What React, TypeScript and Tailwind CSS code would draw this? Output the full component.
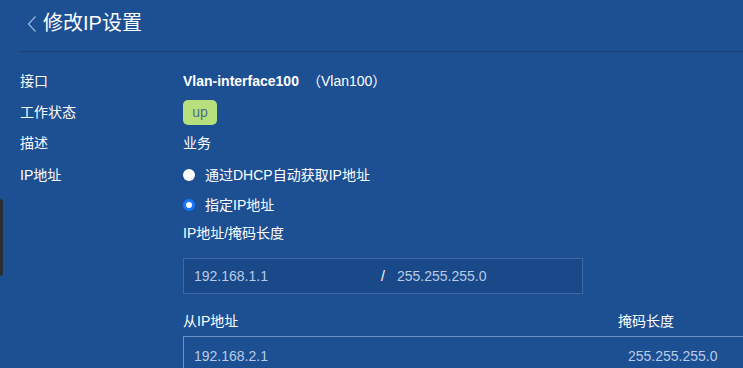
import React from 'react';

const font = { fontFamily: '"Liberation Sans", "Noto Sans CJK SC", sans-serif' };

const Row: React.FC<{ label: string; children?: React.ReactNode; className?: string }> = ({ label, children, className = '' }) => (
  <div className={`flex items-center ${className}`}>
    <div className="w-[163px] shrink-0">{label}</div>
    <div className="flex-1">{children}</div>
  </div>
);

const Radio: React.FC<{ checked?: boolean; label: string }> = ({ checked, label }) => (
  <label className="flex items-center gap-[10px] h-[20px]">
    {checked ? (
      <span className="w-[12px] h-[12px] rounded-full bg-white border-[3px] border-[#1677ff]" />
    ) : (
      <span className="w-[12px] h-[12px] rounded-full bg-white" />
    )}
    <span>{label}</span>
  </label>
);

export default function App() {
  return (
    <div className="relative w-[743px] h-[368px] overflow-hidden bg-[#1d4f93] text-white text-[14px]" style={font}>
      {/* side handle */}
      <div className="absolute left-0 top-[199px] w-[3px] h-[77px] bg-[#2a2d31] rounded-r-[3px]" />

      {/* Header */}
      <div className="ml-[20px] h-[52px] border-b border-[#1b3f73] flex items-center pl-[7px] gap-[6px]">
        <svg width="10" height="18" viewBox="0 0 10 18" fill="none" className="mt-[-4px]">
          <path d="M8.5 1.5 L1.5 9 L8.5 16.5" stroke="#8fb0dd" strokeWidth="1.4" />
        </svg>
        <h1 className="text-[20px] leading-none mt-[-5px]">修改IP设置</h1>
      </div>

      <div className="pl-[20px] pt-[16px]">
        <Row label="接口" className="h-[24px] mt-[1px]">
          <span className="font-bold">Vlan-interface100</span>
          <span className="ml-[8px]">（Vlan100）</span>
        </Row>
        <Row label="工作状态" className="h-[32px] mt-[3px]">
          <span className="inline-flex items-center justify-center w-[34px] h-[25px] rounded-[5px] bg-[#b7e07d] text-[#4a6f8a] text-[14px]">up</span>
        </Row>
        <Row label="描述" className="h-[24px] mt-[3px]">
          业务
        </Row>
        <div className="flex mt-[10px]">
          <div className="w-[163px] shrink-0 h-[20px] flex items-center">IP地址</div>
          <div className="flex-1">
            <Radio label="通过DHCP自动获取IP地址" />
            <div className="mt-[10px]">
              <Radio checked label="指定IP地址" />
            </div>
            <div className="mt-[8px] h-[20px] flex items-center">IP地址/掩码长度</div>
            <div className="mt-[15px] w-[400px] h-[36px] border border-[#3c69a6] bg-[#1a4989] flex items-center text-[#b9cbe6]">
              <span className="pl-[10px] w-[197px]">192.168.1.1</span>
              <span className="text-white">/</span>
              <span className="ml-[12px]">255.255.255.0</span>
            </div>
            <div className="mt-[17px] h-[20px] flex items-center">
              <span className="w-[435px]">从IP地址</span>
              <span>掩码长度</span>
            </div>
            <div className="mt-[5px] h-[40px] border border-[#6d91c3] flex items-center text-[#b9cbe6] -mr-[2px]">
              <span className="pl-[10px] w-[444px]">192.168.2.1</span>
              <span>255.255.255.0</span>
            </div>
          </div>
        </div>
      </div>
    </div>
  );
}
